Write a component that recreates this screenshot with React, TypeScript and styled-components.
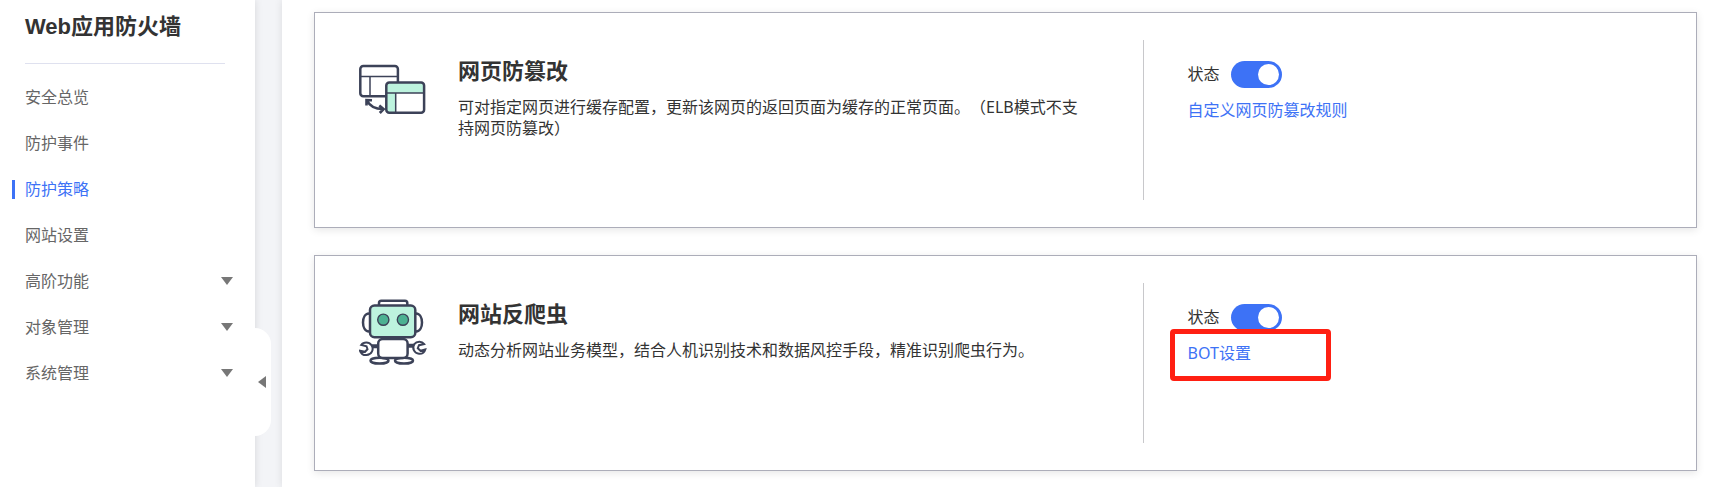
import React from "react";
import styled, { createGlobalStyle, css } from "styled-components";

const INK = "#3c4258";
const MINT = "#bdf3de";
const BLUE = "#3d72f6";

const GlobalStyle = createGlobalStyle`
  *, *::before, *::after { box-sizing: border-box; }
  body {
    margin: 0;
    background: #f3f4f7;
    color: #333;
    font: 400 16px/21px "Noto Sans", "Noto Sans CJK SC", sans-serif;
    text-spacing-trim: space-all;
  }
  h1, h2, p, ul { margin: 0; padding: 0; }
  ul { list-style: none; }
  button { font: inherit; border: 0; padding: 0; background: none; cursor: pointer; }
`;

const Page = styled.div`
  display: flex;
  gap: 27px;
  min-height: 100vh;
`;

const Sidebar = styled.aside`
  position: relative;
  flex: none;
  width: 255px;
  padding: 11px 22px 24px 0;
  background: #fff;
  box-shadow: 0 0 8px rgba(0, 0, 0, 0.12);
`;

const Product = styled.h1`
  margin: 0 8px 10px 25px;
  padding-bottom: 20px;
  border-bottom: 1px solid #dfe1ef;
  font: 700 22px/32px "Liberation Sans", "Noto Sans CJK SC", sans-serif;
`;

const itemStyle = css`
  display: flex;
  align-items: center;
  justify-content: space-between;
  width: 100%;
  height: 46px;
  padding-left: 25px;
  color: #666;
  text-align: left;
  text-decoration: none;
`;

const NavLink = styled.a<{ $active?: boolean }>`
  ${itemStyle}
  ${(p) =>
    p.$active &&
    css`
      justify-content: flex-start;
      gap: 10px;
      padding-left: 12px;
      color: ${BLUE};
      &::before {
        content: "";
        width: 3px;
        height: 19px;
        background: ${BLUE};
      }
    `}
`;

const NavGroup = styled.button`
  ${itemStyle}
  &::after {
    content: "";
    border: 6px solid transparent;
    border-top: 8px solid #777;
    border-bottom: 0;
  }
`;

const CollapseHandle = styled.button`
  position: absolute;
  top: 328px;
  left: 100%;
  display: flex;
  align-items: center;
  width: 16px;
  height: 108px;
  padding-left: 3px;
  border-radius: 0 16px 16px 0;
  background: #fff;
  &::before {
    content: "";
    border: 6px solid transparent;
    border-right: 8px solid #777;
    border-left: 0;
  }
`;

const Content = styled.main`
  flex: 1;
  min-width: 0;
  display: flex;
  flex-direction: column;
  gap: 27px;
  padding: 12px 22px 16px 32px;
  background: #fff;
  box-shadow: 0 0 8px rgba(0, 0, 0, 0.1);
`;

const Card = styled.section`
  display: flex;
  padding: 27px 0;
  border: 1px solid #acadb9;
  background: #fff;
  box-shadow: 0 2px 8px rgba(0, 0, 0, 0.1);
`;

const Summary = styled.div`
  width: 60%;
  display: flex;
  gap: 31px;
  min-height: 160px;
  padding: 16px 54px 0 44px;
  border-right: 1px solid #c8c8cb;
  svg { flex: none; }
`;

const CardTitle = styled.h2`
  margin-bottom: 13px;
  font-size: 22px;
  line-height: 28px;
  font-weight: 700;
`;

const Settings = styled.div`
  width: 40%;
  display: flex;
  flex-direction: column;
  align-items: flex-start;
  gap: 12px;
  padding: 21px 44px 0;
`;

const StatusLabel = styled.label`
  display: flex;
  align-items: center;
  gap: 11px;
`;

const Switch = styled.input`
  appearance: none;
  display: flex;
  align-items: center;
  width: 51px;
  height: 27px;
  margin: 0;
  padding: 0 3px;
  border-radius: 14px;
  background: #adb0b8;
  cursor: pointer;
  &::before {
    content: "";
    width: 21px;
    height: 21px;
    border-radius: 50%;
    background: #fff;
  }
  &:checked {
    justify-content: flex-end;
    background: ${BLUE};
  }
`;

const RuleLink = styled.a<{ $marked?: boolean }>`
  position: relative;
  color: ${BLUE};
  text-decoration: none;
  ${(p) =>
    p.$marked &&
    css`
      &::after {
        content: "";
        position: absolute;
        top: -14px;
        left: -18px;
        width: 161px;
        height: 52px;
        border: 5px solid #ff1f12;
        border-radius: 4px;
      }
    `}
`;

const PagesIcon = () => (
  <svg width="68" height="68" viewBox="0 0 68 68" fill="none" stroke={INK} aria-hidden="true">
    <rect x="1.3" y="10" width="37.6" height="30.3" rx="3" fill="#fff" strokeWidth="2.5" />
    <path d="M1.5 20.6H39M11 20.6V40" strokeWidth="1.5" />
    <rect x="27.3" y="26.6" width="37.8" height="30.2" rx="3" fill="#fff" />
    <path d="M27.5 37V29q0-2.4 2.4-2.4H62.6q2.4 0 2.4 2.4V37H36.7V57H30q-2.5 0-2.5-2.5Z" fill={MINT} stroke="none" />
    <path d="M27.3 37H65M36.7 37V57" strokeWidth="1.5" />
    <rect x="27.3" y="26.6" width="37.8" height="30.2" rx="3" strokeWidth="2.5" />
    <path d="M8 44.5Q12 53 24 53M7.5 49.5V44L13 44.2M20.3 49.5L24.6 53 20.8 57" strokeWidth="2.6" />
  </svg>
);

const RobotIcon = () => (
  <svg width="68" height="68" viewBox="0 0 68 68" fill="none" stroke={INK} strokeWidth="2.5" aria-hidden="true">
    <path d="M20 6V4q0-2.3 2.3-2.3H46q2.3 0 2.3 2.3V6" />
    <path d="M10 14.5C2 15 2 32 10 32.5M57 14.5C65 15 65 32 57 32.5" />
    <rect x="11" y="6.5" width="45.3" height="31.8" rx="4.5" fill={MINT} />
    <circle cx="24.3" cy="20.7" r="5.6" fill="#4cb192" strokeWidth="1.4" />
    <circle cx="43.9" cy="20.7" r="5.6" fill="#4cb192" strokeWidth="1.4" />
    <path d="M13 47.2H19M49 46.8H55" strokeWidth="4" />
    <path d="M2.2 46C4.5 42.8 10 42.6 12.5 46.2 15.3 50.5 12.5 55.8 7.5 56.1 4.5 56.3 2 54.5 1 51.8L6 52.8 8.5 50.3 7.5 47.3Z" fill="#fff" strokeWidth="2" />
    <path d="M65.2 45C62.8 41.8 57.7 42 55.3 45.2 52.7 49.3 55.3 54.5 60 54.8 63 55 65.5 53.2 66.3 50.5L61.5 51.8 58.8 49.2 60 46.2Z" fill="#fff" strokeWidth="2" />
    <ellipse cx="20.5" cy="61.7" rx="9" ry="2.9" fill="#fff" />
    <ellipse cx="45" cy="61.7" rx="9" ry="2.9" fill="#fff" />
    <rect x="19.2" y="40" width="29.4" height="19" rx="4.5" fill="#fff" />
  </svg>
);

const NAV_LINKS = ["安全总览", "防护事件", "防护策略", "网站设置"];
const NAV_GROUPS = ["高阶功能", "对象管理", "系统管理"];

const FEATURES = [
  {
    icon: <PagesIcon />,
    title: "网页防篡改",
    text: "可对指定网页进行缓存配置，更新该网页的返回页面为缓存的正常页面。（ELB模式不支持网页防篡改）",
    link: "自定义网页防篡改规则",
    marked: false,
  },
  {
    icon: <RobotIcon />,
    title: "网站反爬虫",
    text: "动态分析网站业务模型，结合人机识别技术和数据风控手段，精准识别爬虫行为。",
    link: "BOT设置",
    marked: true,
  },
];

export default function App() {
  return (
    <Page lang="zh-CN">
      <GlobalStyle />
      <Sidebar>
        <Product>Web应用防火墙</Product>
        <nav>
          <ul>
            {NAV_LINKS.map((name) => (
              <li key={name}>
                <NavLink href="#" $active={name === "防护策略"}>{name}</NavLink>
              </li>
            ))}
            {NAV_GROUPS.map((name) => (
              <li key={name}>
                <NavGroup type="button" aria-expanded={false}>{name}</NavGroup>
              </li>
            ))}
          </ul>
        </nav>
        <CollapseHandle type="button" aria-label="收起导航" />
      </Sidebar>
      <Content>
        {FEATURES.map((f) => (
          <Card key={f.title}>
            <Summary>
              {f.icon}
              <div>
                <CardTitle>{f.title}</CardTitle>
                <p>{f.text}</p>
              </div>
            </Summary>
            <Settings>
              <StatusLabel>
                状态
                <Switch type="checkbox" role="switch" defaultChecked />
              </StatusLabel>
              <RuleLink href="#" $marked={f.marked}>{f.link}</RuleLink>
            </Settings>
          </Card>
        ))}
      </Content>
    </Page>
  );
}
